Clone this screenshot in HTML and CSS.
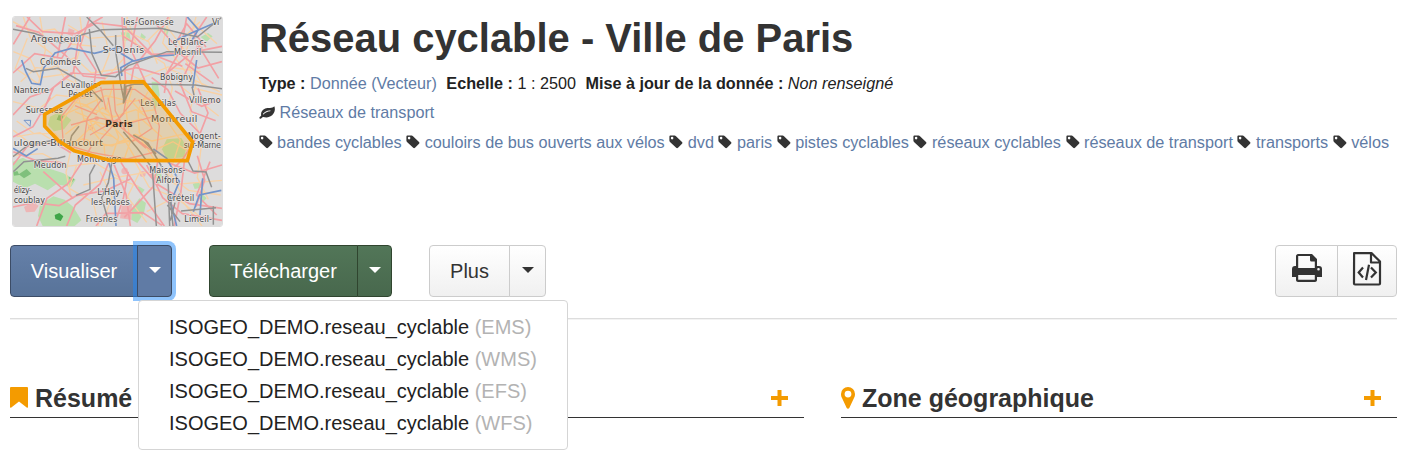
FILE: index.html
```html
<!DOCTYPE html>
<html lang="fr">
<head>
<meta charset="utf-8">
<title>Réseau cyclable - Ville de Paris</title>
<link rel="stylesheet" href="styles.css">
</head>
<body>
<svg class="defs" aria-hidden="true">
  <symbol id="tag" viewBox="0 0 14 14"><path fill-rule="evenodd" d="M1.3.6h4.300c.5 0 1 .2 1.400.6l6 5.700c.6.6.6 1.200 0 1.800l-4 4c-.6.6-1.200.6-1.800 0L1 7C.6 6.600.4 6.100.4 5.600V1.500c0-.5.4-.9.9-.9zM3.100 1.800a1.300 1.300 0 1 0 0 2.600 1.300 1.300 0 0 0 0-2.600z"/></symbol>
  <symbol id="plus" viewBox="0 0 17 16"><path d="M6.500 0h4v6H17v4h-6.500v6h-4v-6H0V6h6.500z"/></symbol>
</svg>
<header class="head">
  <svg class="map" viewBox="39 36 627 627">
    <rect x="39" y="36" width="627" height="627" fill="#dddcdc"/>
    <g fill="#b9dfae">
      <path d="M39 470l30-12 25 14 40-4 10 22 45 14 38 20-14 22-44-8-26 18-38-20-30 14-36-20z"/>
      <path d="M120 600l40-26 34 10 26 22 24 40-20 17h-96l-14-30z"/>
      <path d="M150 335l24-12 22 8 18 14-22 28-30 6-18-20z"/>
      <path d="M500 403l44-4 16 26-8 32-52 4-14-28z"/>
      <path d="M362 82l26 0 4 24-24 2zM424 84l14 12-8 10-10-6zM494 66l12 12-6 18-10-14zM602 96l22-12 14 10-18 16zM396 610l22-30 20 14-6 30-20 30-18-10zM462 500l20 4 10 24-18 8zM578 536l20-6 6 18-20 4zM455 230l18 0 6 40-14 50-8-20zM600 560l20 20-20 20zM410 540l24 14-10 14z"/>
    </g>
    <g fill="#7fc07c"><path d="M56 508l24-16 14 14-22 14zM40 502l12-4 6 12-16 2zM176 330l14 4-6 14-14-4zM206 516l18 6-10 12z"/></g>
    <path fill="#3fa548" d="M164 630l14-6 12 10-8 14-16-6z"/>
    <g fill="#edb6b6"><path d="M72 606l24-16 20 12-12 18-26 2zM366 596h30l-2 48-34-4zM206 70l18 6-6 18-16-6zM590 120l18 6-4 20-18-8z"/><circle cx="374" cy="498" r="10"/><circle cx="428" cy="507" r="9"/><circle cx="290" cy="340" r="7"/><circle cx="272" cy="368" r="8"/></g>
    <g fill="none" stroke="#f8d1a5" stroke-width="4">
      <path d="M39 50L98 82l66-10 44 45 80 7M70 36l20 60 65 50 36 71 70 36M39 290l80 20 50-40 83 10 66-60 52-58 13-136M50 395l70-12 66 40 60-20 90 20 70-35 50 20 90-20 120 14M150 190l74-32 50 46 82-12 62 30 86-36 98 14M240 36l8 65-26 92 12 90-52 70M380 36l30 85 83 54 24 74-20 92 44 64-30 96 38 76M39 452l89-6 72 38 86-10 70 42 82-14 90 36 138-12M230 480l-22 70 72 42 16 71M405 470l42 76 98 40 61 77M510 36l-22 78 56 68 46 70 76 18M588 36l-34 120 34 78-18 86 36 86-14 112 33 65M50 348l52 38 64 0 44 60-12 56 16 81"/>
      <path d="M204 286l54 14 60-28 78 18 70-14M190 330l62-28 88 34 68-22 68 44M196 388l60-46 80 22 88-22 62 54M216 422l70-68 72 56 64-8 40 60M232 262l20 82 60 76 4 46M280 242l20 78 70 78 36 62M340 236l-20 70 36 90-20 60M400 240l-22 74 12 98-18 52M444 260l-30 56 4 66 46 66M245 400l74 22 88-16 50 22M260 300l26 26 22-18 34 28M225 320l38 16 26 46 48 12M350 300l44-12 30 32 42-6M475 430l44-20 42 26M480 298l58 66"/>
      <path d="M40 140l50 20 28 58 88-12M82 100l-36 90 72 49M120 36l16 100-20 100M306 50l22 98-24 60M440 110l54-54 66 88M472 176l-26-66-80-38M600 50l-64 62 74 134M505 190l154 70M530 235l126 98M300 500l36 76-32 87M250 540l94-22 72 26M440 620l86-44 88 70M480 490l86 66 96 14M420 500l-38 76 58 76M62 230l46-42 96 8M204 60l64 40 102-8 66 42M40 376l46 36 94 0M565 40l86 76"/>
    </g>
    <g fill="none" stroke="#f2a0a4" stroke-width="5">
      <path d="M48 62l68 20 80 68 54 63 67 7M39 204l65-58 81 14 41-66 42-35 40-23M81 36l46 44 98 6 64-32 84 10 83 84 91 36M236 100l-16 103-59 44-36 82M270 36l-30 87 48 73-6 44M366 36l8 146 4 81M505 36l-40 72-64 80-13 73M412 36l-20 96 44 98M39 330l51-54 62-22 61-50 99 6 97-22 83 24 84-70 90-18M666 170l-72 19-54-43-86 2-83-53M39 396l60-31 52-88M560 36l-17 97-40 68-10 63M590 132l-49 104 34 84 72 27M455 218l48 36 38 71 58 59M39 480l43-56 82-10 49 29M110 663l31-83 62-43 48-73 26-45M200 663l26-63 74-63 30-73M336 463l42 105 13 95M357 463l54 85 82 115M406 461l66 77 96 58 98 14M474 465l-14 80-87 92M666 480l-82 24-82-32M39 606l62-13 76 9 52-30 87-15 75-35M553 470l-10 88-20 105M592 452l22 73-26 80M40 440l65 26 90 8M288 663l30-38 110-2 58 38M588 400l-39 61-42 44M350 640l20-60 15-80M440 480l48 98 59 48 119 20"/>
      <path stroke-width="4" d="M190 417l-6-82 44-54 84-28 93 0 55 39 18 72-9 76-88 22-106-20zM250 420l12-80 44-58M324 278l14 68 100 84M406 280l-50 61-86 49M213 360l80-22 90 18 80-22M225 302l66 27M340 238l6 80 31 60 90 68M382 256l-11 70-70 78M416 284l40 86-60 40M302 246l16 68"/>
      <path d="M530 110l30-54 58 70M556 176l84 60M525 258l80 46 54-20M470 60l60 66M620 36l-40 60 76 124M594 250l30 74-24 62M630 470l-40 100 60 60M90 36l-50 82M196 36l-24 120M130 500l90 80"/>
    </g>
    <g fill="none" stroke="#7394ca" stroke-width="5">
      <path d="M65 165l12 34 18 36 26 4 10-50 34-45 48-14 70 15 76-18M341 132l60 36 54-14 71-4M366 213l-4-25 36-20M530 105l46-22 80-34M562 36l33 38-28 46M325 468l16 52 7 143M590 165l-12 84M460 432l40 28 38 70-26 62 18 71M39 430l40 23 34-22M580 620l18-50 66-14M600 630l8-110"/>
      <path stroke-width="3" d="M72 346l18 18 2-18z"/>
    </g>
    <g fill="none" stroke="#929292" stroke-width="4.500">
      <path d="M39 73l63 12 80 29 68-26 56-14 176-4 110 26 74-60M268 72l8 75 28 64 43 4 38-33 116-42 165 2M347 90l0 50 16 102 10 50M394 245l-24 50 4-60M373 292l5-48 25-7 183 3 80 11M260 36l42 41 38 45M78 190l22 10 74-10 84 48 50 52M576 245l8 34M39 455l47-36 67-12M40 500l32-30 102-10 22-6M400 390l44 24 26 45 34 58 5 146M428 404l40 43M370 380l42 50 45 60 12 173M337 463l-12 70-20 45 21 72M285 479l-16 30 1 44-42 18M510 570l9 93M525 593l-14 54M502 600l38 50M564 468l15 30 39 3 17 46M543 618l105-10M640 604v55M237 364l-22 28-10 40"/>
    </g>
    <g class="places">
      <text x="369" y="60" textLength="152">les-Gonesse</text><text x="636" y="60" textLength="22">Vi</text>
      <text class="big" x="92" y="110" textLength="152">Argenteuil</text><text class="big" x="308" y="143" textLength="124">S<tspan class="tiny" dy="-6">t</tspan><tspan dy="6">-Denis</tspan></text>
      <text x="504" y="120" textLength="116">Le Blanc-</text><text x="522" y="149" textLength="82">Mesnil</text>
      <text x="120" y="181" textLength="122">Colombes</text><text x="480" y="226" textLength="99">Bobigny</text>
      <text x="41" y="263" textLength="106">Nanterre</text><text x="183" y="249" textLength="118">Levallois-</text><text x="205" y="277" textLength="72">Perret</text>
      <text x="421" y="302" textLength="107">Les Lilas</text><text x="567" y="295" textLength="95">Villemo</text>
      <text x="77" y="324" textLength="112">Suresnes</text><text class="big" x="453" y="351" textLength="139">Montreuil</text>
      <text class="big" x="41" y="424" textLength="268">ulogne-Billancourt</text><text x="563" y="401" textLength="99">Nogent-</text><text x="551" y="430" textLength="112">sur-Marne</text>
      <text x="231" y="471" textLength="134">Montrouge</text><text x="101" y="490" textLength="99">Meudon</text>
      <text x="448" y="504" textLength="108">Maisons-</text><text x="468" y="533" textLength="67">Alfort</text>
      <text x="41" y="563" textLength="55">élizy-</text><text x="41" y="593" textLength="94">coublay</text>
      <text x="292" y="571" textLength="76">L'Hay-</text><text x="273" y="601" textLength="116">les-Roses</text><text x="501" y="589" textLength="82">Créteil</text>
      <text x="257" y="651" textLength="95">Fresnes</text><text x="553" y="652" textLength="83">Limeil-</text>
    </g>
    <path class="zone" d="M303 233l127-3 148 181-16 56-234-1-106-29-46-29-42-44v-36z"/>
    <text class="capital" x="316" y="366" textLength="82">Paris</text>
  </svg>
  <div class="info">
    <h1>Réseau cyclable - Ville de Paris</h1>
    <p class="facts"><b>Type :</b> <a>Donnée (Vecteur)</a> <b class="next">Echelle :</b> 1 : 2500 <b class="next">Mise à jour de la donnée :</b> <i>Non renseigné</i></p>
    <p class="theme"><svg class="leaf" viewBox="0 0 16 13"><path fill-rule="evenodd" d="M15.300.2c1 2.200.6 5.200-.8 7.400-1.600 2.600-4.300 3.900-7 3.800-1.500 0-2.700-.6-3.600-.4-.9.300-1.500 1.800-2.400 1.800-.7 0-1.200-.7-1.100-1.300.2-.8 1.600-1.400 1.800-2.100C1.500 6.100 3.300 3.500 6.200 2.400 8.800 1.400 13.500 2.700 15.300.2zM11.200 4.400C8 4.200 5.800 5.600 4 7.800c-.2.500.3.900.7.500C6.500 6.400 8.300 5.400 11.200 5.200c.5 0 .5-.8 0-.8z"/></svg> <a>Réseaux de transport</a></p>
    <p class="tags"><svg class="tag"><use href="#tag"/></svg> <a>bandes cyclables</a> <svg class="tag"><use href="#tag"/></svg> <a>couloirs de bus ouverts aux vélos</a> <svg class="tag"><use href="#tag"/></svg> <a>dvd</a> <svg class="tag"><use href="#tag"/></svg> <a>paris</a> <svg class="tag"><use href="#tag"/></svg> <a>pistes cyclables</a> <svg class="tag"><use href="#tag"/></svg> <a>réseaux cyclables</a> <svg class="tag"><use href="#tag"/></svg> <a>réseaux de transport</a> <svg class="tag"><use href="#tag"/></svg> <a>transports</a> <svg class="tag"><use href="#tag"/></svg> <a>vélos</a></p>
  </div>
</header>
<nav class="toolbar">
  <div class="group view"><button class="main">Visualiser</button><button class="toggle focused"><span class="caret"></span></button>
    <ul class="menu"><li>ISOGEO_DEMO.reseau_cyclable <span>(EMS)</span></li><li>ISOGEO_DEMO.reseau_cyclable <span>(WMS)</span></li><li>ISOGEO_DEMO.reseau_cyclable <span>(EFS)</span></li><li>ISOGEO_DEMO.reseau_cyclable <span>(WFS)</span></li></ul>
  </div>
  <div class="group download"><button class="main">Télécharger</button><button class="toggle"><span class="caret"></span></button></div>
  <div class="group more"><button class="main">Plus</button><button class="toggle"><span class="caret"></span></button></div>
  <div class="group export">
    <button class="print"><svg width="32" height="30" viewBox="0 0 32 30"><path fill="#333" fill-rule="evenodd" d="M7 1h14l5 5v7h2c2 0 3 1 3 3v8h-5v3c0 1-1 2-2 2H7c-1 0-2-1-2-2v-3H1v-8c0-2 1-3 3-3h1V3c0-1 1-2 2-2zM7.200 3v12H23.800V8.500H20.500q-1.500 0-1.500-1.500V3zM7.200 22v4.800H23.800V22zM27.500 15a1.300 1.300 0 1 0 0 2.600 1.300 1.300 0 0 0 0-2.600z"/></svg></button>
    <button class="code"><svg width="30" height="34" viewBox="0 0 30 34"><g fill="none" stroke="#333" stroke-width="2.200" stroke-linejoin="round"><path d="M2.100 1.100H19.500L28 9.500V31.500a1 1 0 0 1-1 1H3a1 1 0 0 1-1-1zM19 1.500V10.500H28"/><path stroke-linejoin="miter" d="M11 15.500L6.700 20.500 11 25.500M19 15.500L23.800 20.500 19 25.500M17 12.800L14 28"/></g></svg></button>
  </div>
</nav>
<hr>
<main class="sections">
  <h2 class="summary"><svg class="bookmark" viewBox="0 0 18 21"><path d="M1 0h16q1 0 1 1v19q0 1-1 .7L9 14.500 1 20.700Q0 21 0 20V1Q0 0 1 0z"/></svg><span>Résumé</span><svg class="plus"><use href="#plus"/></svg></h2>
  <h2 class="area"><svg class="pin" viewBox="0 0 14 22"><path fill-rule="evenodd" d="M7 0a7 7 0 0 1 7 7c0 2-.5 3-1 4L8.300 21c-.5 1-2.100 1-2.600 0L1 11C.5 10 0 9 0 7a7 7 0 0 1 7-7zm0 3.700a3.400 3.400 0 1 0 0 6.800 3.400 3.400 0 0 0 0-6.800z"/></svg><span>Zone géographique</span><svg class="plus"><use href="#plus"/></svg></h2>
</main>
</body>
</html>
```
FILE: styles.css
```css
* { box-sizing: border-box; }
body { margin: 0; padding: 16px 25px 0 10px; height: 455px; overflow: hidden; background: #fff; color: #333; font-family: "Liberation Sans", Arial, sans-serif; font-size: 16px; }
.defs { display: none; }
.head { display: flex; height: 229px; padding-left: 2px; }
.map { width: 211px; height: 211px; border: 1px solid #ddd; border-radius: 3px; flex: none; }
.places { font-family: "DejaVu Sans", sans-serif; font-size: 24px; fill: #484848; paint-order: stroke; stroke: #e8e6e6; stroke-width: 4px; stroke-linejoin: round; }
.places .big { font-size: 28px; }
.places .tiny { font-size: 16px; }
.zone { fill: rgba(245, 155, 0, .2); stroke: #f49b00; stroke-width: 11px; stroke-linejoin: round; }
.capital { font: bold 27px "DejaVu Sans", sans-serif; fill: #3c3020; }
.info { padding-left: 35px; white-space: nowrap; }
h1 { margin: 0 0 0 1px; font-size: 39.950px; line-height: 44px; }
p { margin: 0; line-height: 20px; font-size: 16.200px; }
.facts { margin: 13px 0 0 1px; color: #222; }
.theme { margin-top: 9px; padding-left: 1px; }
.tags { margin-top: 10px; padding-left: .6px; font-size: 16.240px; }
a { color: #607ba5; }
.next { margin-left: 5px; }
.leaf { width: 16px; height: 13px; fill: #333; vertical-align: -1px; }
.tag { width: 14px; height: 14px; fill: #333; vertical-align: -1px; }
.toolbar { display: flex; height: 52px; }
.group { display: flex; position: relative; }
button { display: flex; align-items: center; justify-content: center; height: 52px; margin: 0; padding: 0; border: 1px solid #ccc; background: linear-gradient(#fff, #f0f0f0); color: #333; font: 20px "Liberation Sans", Arial, sans-serif; }
button:first-child { border-radius: 4px 0 0 4px; }
button:nth-child(2) { border-radius: 0 4px 4px 0; margin-left: -1px; }
.caret { border: 6px solid transparent; border-top-color: currentColor; border-bottom: 0; margin-top: -3px; }
.view button { color: #fff; background: linear-gradient(#6580a9, #587399); border-color: #3c4c66; }
.view .main { width: 128px; }
.view .toggle { width: 35px; }
.view .toggle.focused { background: #607ba5; box-shadow: 0 0 0 4px rgba(30, 136, 250, .5); }
.download { margin-left: 37px; }
.download button { color: #fff; background: linear-gradient(#527658, #48684d); border-color: #30452f; }
.download .main { width: 149px; }
.download .toggle { width: 35px; }
.more { margin-left: 37px; }
.more .main { width: 81px; }
.more .toggle { width: 37px; }
.export { margin-left: auto; }
.print { width: 63px; }
.export .code { width: 60px; }
.print svg { margin-top: -7px; }
.code svg { margin-top: -5px; }
.menu { position: absolute; z-index: 2; left: 128px; top: 55px; width: 430px; height: 150px; margin: 0; padding: 10px 30px; border: 1px solid #d5d5d5; border-radius: 4px; background: #fff; color: #222; list-style: none; font-size: 20px; line-height: 32px; white-space: nowrap; }
.menu span { color: #b3b3b3; }
hr { height: 2px; margin: 21px 0 0; border: 0; background: linear-gradient(#ddd 50%, #f3f3f3 50%); }
.sections { display: grid; grid-template-columns: 794px 556px; column-gap: 37px; margin-top: 58px; }
h2 { display: flex; align-items: center; height: 40px; margin: 0; border-bottom: 1px solid #333; font-size: 25px; line-height: 40px; }
h2 svg { fill: #f49b00; }
.bookmark { width: 18px; height: 21px; margin-right: 7px; }
.pin { width: 14px; height: 22px; margin-right: 7px; }
.plus { width: 17px; height: 16px; margin: 0 16px 0 auto; }
```
